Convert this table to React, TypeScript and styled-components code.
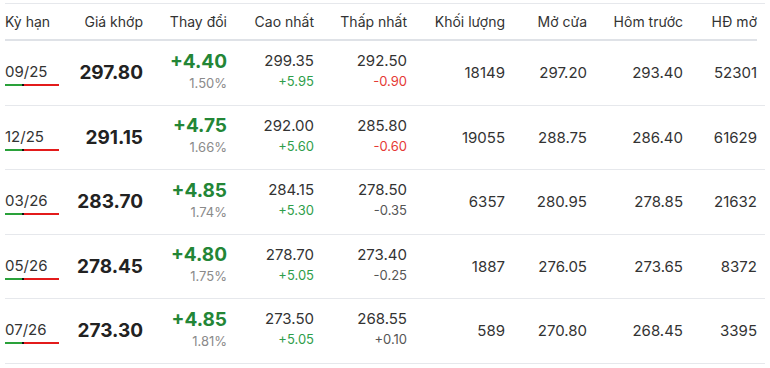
import styled, { createGlobalStyle } from 'styled-components'

const GlobalStyle = createGlobalStyle`
  body {
    margin: 0;
    background: #ffffff;
    font-family: Inter, "Noto Sans", sans-serif;
    color: #333333;
  }
`

const COLS = '65px 73px 84px 87px 93px 98px 82px 96px 74px'

const Table = styled.div`
  width: 760px;
  margin: 3px 0 0 5px;
  padding-right: 8px;
  box-sizing: border-box;
  border-top: 1px solid #e6e8ec;
`

const HeadRow = styled.div`
  display: grid;
  grid-template-columns: ${COLS};
  height: 35px;
  align-items: center;
  border-bottom: 2px solid #dfe2e7;
  font-size: 14px;
  color: #333333;
`

const Row = styled.div`
  display: grid;
  grid-template-columns: ${COLS};
  height: 63.5px;
  align-items: center;
  border-bottom: 1px solid #e6e8ec;
  margin-right: -8px;
  padding-right: 8px;
`

const HeadCell = styled.div<{ $left?: boolean }>`
  text-align: ${(p) => (p.$left ? 'left' : 'right')};
  white-space: nowrap;
`

const Cell = styled.div<{ $stack?: boolean }>`
  display: flex;
  flex-direction: column;
  align-items: flex-end;
  white-space: nowrap;
  padding-bottom: ${(p) => (p.$stack ? '3px' : '0')};
`

const TermCell = styled.div`
  display: flex;
  flex-direction: column;
  align-items: flex-start;
  gap: 3px;
  padding-top: 3px;
`

const Term = styled.span`
  font-size: 15px;
  color: #333333;
`

const TermBar = styled.div`
  display: flex;
  width: 54px;
  height: 2px;
`

const BarPart = styled.span<{ $color: string; $w: number }>`
  display: block;
  width: ${(p) => p.$w}px;
  background: ${(p) => p.$color};
`

const Price = styled.span`
  font-size: 19px;
  font-weight: 700;
  color: #222222;
`

const Change = styled.span`
  font-size: 19px;
  font-weight: 700;
  color: #238636;
  line-height: 24px;
`

const Percent = styled.span`
  font-size: 13px;
  color: #8a8a8a;
  line-height: 19px;
`

const Value = styled.span`
  font-size: 15px;
  color: #333333;
  line-height: 21px;
`

const Sub = styled.span<{ $tone: 'up' | 'down' | 'flat' }>`
  font-size: 13px;
  line-height: 21px;
  color: ${(p) => (p.$tone === 'up' ? '#2f9e4a' : p.$tone === 'down' ? '#e53935' : '#555555')};
`

type Item = {
  term: string
  price: string
  change: string
  pct: string
  high: string
  highD: string
  low: string
  lowD: string
  vol: string
  open: string
  prev: string
  oi: string
}

const rows: Item[] = [
  { term: '09/25', price: '297.80', change: '+4.40', pct: '1.50%', high: '299.35', highD: '+5.95', low: '292.50', lowD: '-0.90', vol: '18149', open: '297.20', prev: '293.40', oi: '52301' },
  { term: '12/25', price: '291.15', change: '+4.75', pct: '1.66%', high: '292.00', highD: '+5.60', low: '285.80', lowD: '-0.60', vol: '19055', open: '288.75', prev: '286.40', oi: '61629' },
  { term: '03/26', price: '283.70', change: '+4.85', pct: '1.74%', high: '284.15', highD: '+5.30', low: '278.50', lowD: '-0.35', vol: '6357', open: '280.95', prev: '278.85', oi: '21632' },
  { term: '05/26', price: '278.45', change: '+4.80', pct: '1.75%', high: '278.70', highD: '+5.05', low: '273.40', lowD: '-0.25', vol: '1887', open: '276.05', prev: '273.65', oi: '8372' },
  { term: '07/26', price: '273.30', change: '+4.85', pct: '1.81%', high: '273.50', highD: '+5.05', low: '268.55', lowD: '+0.10', vol: '589', open: '270.80', prev: '268.45', oi: '3395' },
]

const headers = ['Kỳ hạn', 'Giá khớp', 'Thay đổi', 'Cao nhất', 'Thấp nhất', 'Khối lượng', 'Mở cửa', 'Hôm trước', 'HĐ mở']

function lowTone(r: Item): 'up' | 'down' | 'flat' {
  // only the two nearest terms are highlighted in red
  if (r.lowD.startsWith('-') && Math.abs(parseFloat(r.lowD)) >= 0.5) return 'down'
  return 'flat'
}

function App() {
  return (
    <>
      <GlobalStyle />
      <Table>
        <HeadRow>
          {headers.map((h, i) => (
            <HeadCell key={h} $left={i === 0}>
              {h}
            </HeadCell>
          ))}
        </HeadRow>
        {rows.map((r) => (
          <Row key={r.term}>
            <TermCell>
              <Term>{r.term}</Term>
              <TermBar>
                <BarPart $color="#2aa13a" $w={17} />
                <BarPart $color="#111111" $w={2} />
                <BarPart $color="#e31b1b" $w={35} />
              </TermBar>
            </TermCell>
            <Cell>
              <Price>{r.price}</Price>
            </Cell>
            <Cell $stack>
              <Change>{r.change}</Change>
              <Percent>{r.pct}</Percent>
            </Cell>
            <Cell $stack>
              <Value>{r.high}</Value>
              <Sub $tone="up">{r.highD}</Sub>
            </Cell>
            <Cell $stack>
              <Value>{r.low}</Value>
              <Sub $tone={lowTone(r)}>{r.lowD}</Sub>
            </Cell>
            <Cell>
              <Value>{r.vol}</Value>
            </Cell>
            <Cell>
              <Value>{r.open}</Value>
            </Cell>
            <Cell>
              <Value>{r.prev}</Value>
            </Cell>
            <Cell>
              <Value>{r.oi}</Value>
            </Cell>
          </Row>
        ))}
      </Table>
    </>
  )
}

export default App
